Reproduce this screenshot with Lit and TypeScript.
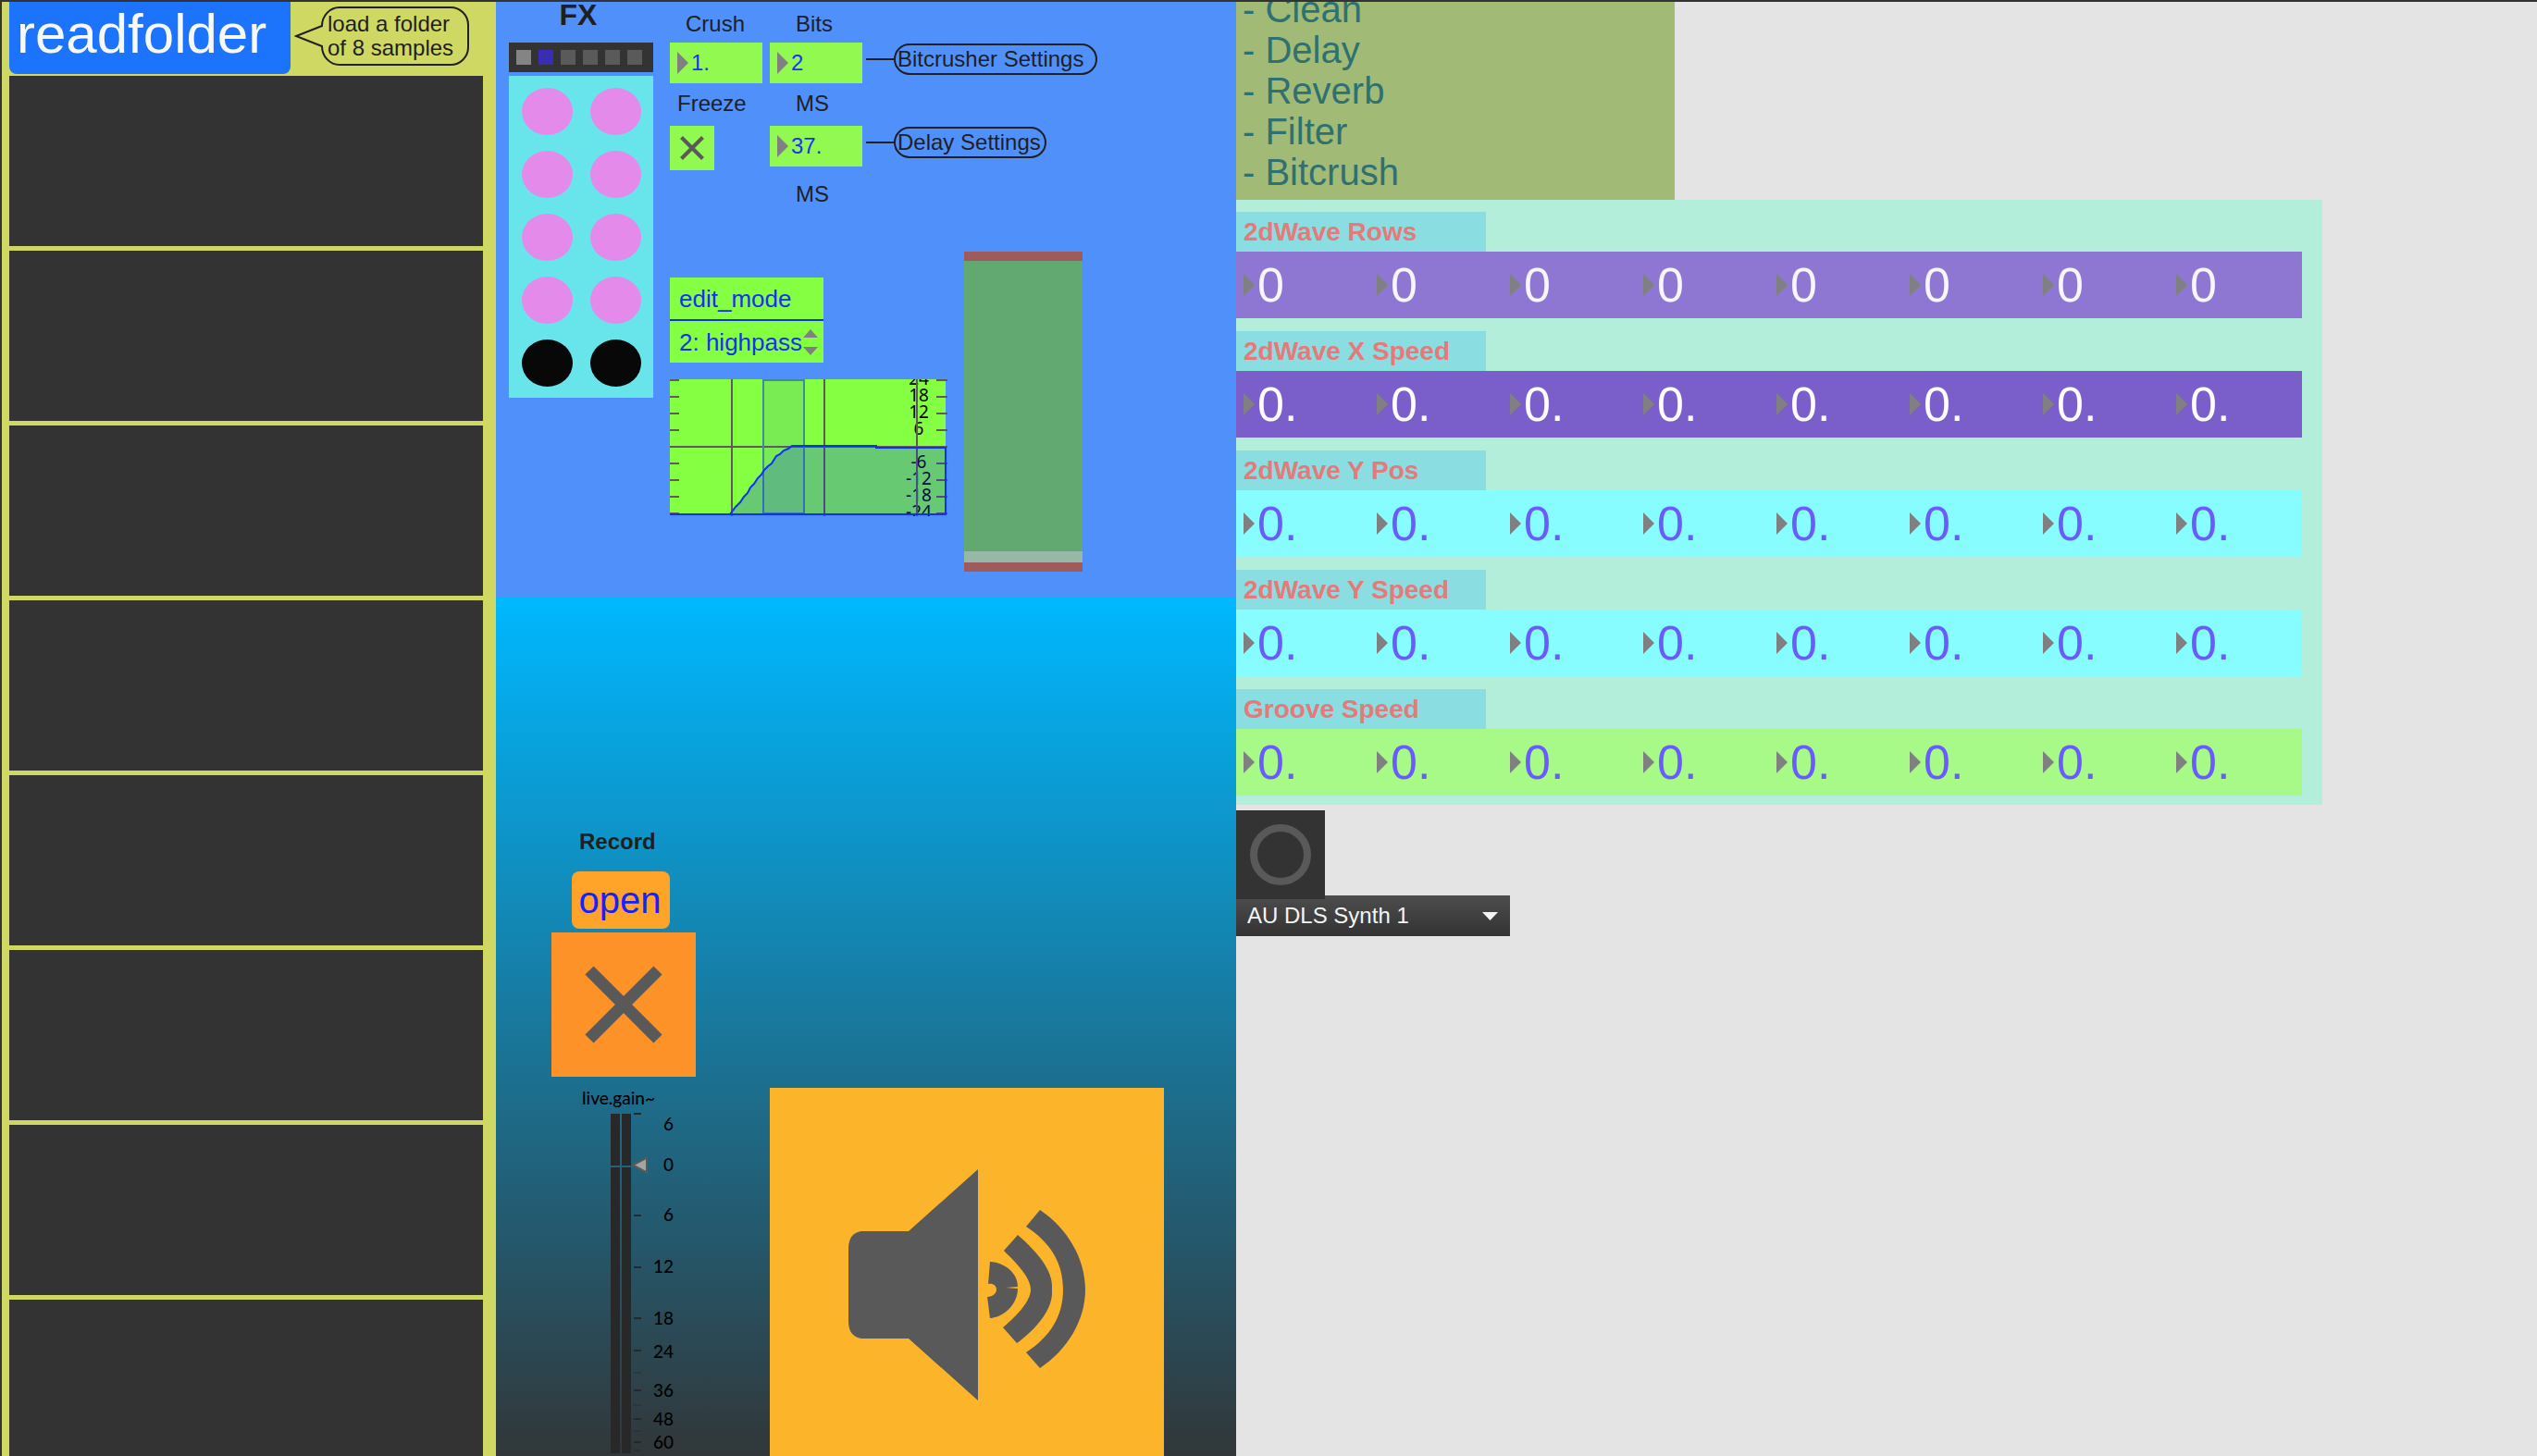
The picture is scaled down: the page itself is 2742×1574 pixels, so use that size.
import { LitElement, html, svg, css } from "lit";
import { customElement, property } from "lit/decorators.js";

const boxStyles = css`
  *,
  *::before,
  *::after {
    box-sizing: border-box;
  }
  button,
  input,
  select {
    margin: 0;
    padding: 0;
    border: 0;
    border-radius: 0;
    background: none;
    color: inherit;
    font: inherit;
    appearance: none;
  }
`;

/* Number box: a drag triangle followed by an editable value. */
@customElement("number-box")
export class NumberBox extends LitElement {
  @property() value = "0";
  @property() name = "";

  static styles = [
    boxStyles,
    css`
      :host {
        display: flex;
        align-items: center;
        gap: 3px;
        padding-left: 8px;
        min-width: 0;
      }
      .arrow {
        flex: none;
        width: 12px;
        height: 24px;
        fill: #808080;
      }
      .value {
        flex: 1;
        width: 100%;
        min-width: 0;
        height: 100%;
      }
    `,
  ];

  render() {
    return html`
      <svg class="arrow" viewBox="0 0 12 24" aria-hidden="true"><path d="M0 0 12 12 0 24Z" /></svg>
      <input class="value" type="text" aria-label=${this.name} .value=${this.value} />
    `;
  }
}

/* Toggle: a tick box drawn as a coloured square with a cross. */
@customElement("cross-toggle")
export class CrossToggle extends LitElement {
  @property() name = "";
  @property({ type: Boolean }) large = false;

  static styles = [
    boxStyles,
    css`
      :host {
        display: grid;
      }
      .box,
      .cross {
        grid-area: 1 / 1;
        width: 100%;
        height: 100%;
      }
      .cross {
        pointer-events: none;
        fill: none;
        stroke: #595959;
      }
    `,
  ];

  render() {
    return html`
      <input class="box" type="checkbox" aria-label=${this.name} />
      ${this.large
        ? html`<svg class="cross" viewBox="0 0 156 156" stroke-width="13">
            <path d="M41 41 115 115M115 41 41 115" />
          </svg>`
        : html`<svg class="cross" viewBox="0 0 48 48" stroke-width="4">
            <path d="M12.5 12.5 35.5 35.5M35.5 12.5 12.5 35.5" />
          </svg>`}
    `;
  }
}

const BANKS = [
  { title: "2dWave Rows", tone: "rows", value: "0" },
  { title: "2dWave X Speed", tone: "xspeed", value: "0." },
  { title: "2dWave Y Pos", tone: "wave", value: "0." },
  { title: "2dWave Y Speed", tone: "wave", value: "0." },
  { title: "Groove Speed", tone: "groove", value: "0." },
];

const EFFECTS = ["Clean", "Delay", "Reverb", "Filter", "Bitcrush"];

const GRAPH_TICKS = [1, 19, 37, 55, 91, 109, 127, 145];
const GRAPH_LABELS: [string, number][] = [
  ["24", 6],
  ["18", 24],
  ["12", 42],
  ["6", 60],
  ["-6", 96],
  ["-12", 114],
  ["-18", 132],
  ["-24", 150],
];

const METER_LABELS: [string, number][] = [
  ["6", 19],
  ["0", 63],
  ["6", 117],
  ["12", 173],
  ["18", 229],
  ["24", 265],
  ["36", 307],
  ["48", 338],
  ["60", 363],
];
const METER_TICKS = [1, 111, 167, 222, 257, 300, 331, 356];
const METER_FAINT_TICKS = [281, 316, 344, 365];

@customElement("app-root")
export class AppRoot extends LitElement {
  static styles = [
    boxStyles,
    css`
      :host {
        display: grid;
        grid-template-columns: 534fr 800fr 1406fr;
        grid-template-rows: minmax(0, 1fr);
        box-sizing: border-box;
        width: 100%;
        height: 100vh;
        overflow: hidden;
        border-top: 2px solid #333;
        border-left: 2px solid #333;
        background: #e4e4e4;
        color: #1f1f1f;
        font-family: "Liberation Sans", Arial, sans-serif;
        font-size: 24px;
        line-height: 28px;
      }

      /* sample column */
      .samples {
        padding: 0 14px 0 8px;
        background: #cfd863;
        overflow: hidden;
      }
      .samples-head {
        display: flex;
        align-items: flex-start;
        gap: 4px;
        height: 80px;
      }
      .readfolder {
        width: 304px;
        height: 78px;
        padding: 0 0 8px 8px;
        border-radius: 0 0 8px 8px;
        background: #1b74fb;
        color: #f8f8f8;
        font-size: 60px;
        line-height: 70px;
        text-align: left;
      }
      .bubble {
        display: grid;
        margin-top: 4px;
      }
      .bubble-shape,
      .bubble-text {
        grid-area: 1 / 1;
      }
      .bubble-shape {
        width: 190px;
        height: 66px;
        fill: none;
        stroke: #1f1f1f;
        stroke-width: 2;
      }
      .bubble-text {
        padding: 7px 0 0 36px;
        line-height: 26px;
      }
      .slots {
        display: grid;
        grid-auto-rows: 184px;
        gap: 5px;
      }
      .slot {
        background: #333;
      }

      /* middle column */
      .middle {
        display: flex;
        flex-direction: column;
        overflow: hidden;
      }
      .fx {
        flex: none;
        display: grid;
        grid-template-columns: 156px 1fr;
        column-gap: 18px;
        padding: 0 14px 27px 14px;
        background: #5090fb;
      }
      .fx-title {
        margin: 0 0 16px;
        padding-right: 6px;
        font-size: 32px;
        line-height: 28px;
        text-align: center;
      }
      .presets {
        display: flex;
        gap: 8px;
        height: 32px;
        margin-bottom: 4px;
        padding: 8px;
        background: #333;
      }
      .preset {
        width: 16px;
        height: 16px;
        background: #5a5a5a;
      }
      .preset.stored {
        background: #848484;
      }
      .preset.active {
        background: #3a2db4;
      }
      .matrix {
        display: grid;
        grid-template-columns: repeat(2, 1fr);
        grid-auto-rows: 68px;
        place-items: center;
        padding: 4px;
        background: #67e5eb;
      }
      .cell {
        width: 55px;
        height: 51px;
        border-radius: 50%;
        background: #e48aeb;
      }
      .cell.off {
        background: #080808;
      }

      .row {
        display: flex;
        align-items: flex-start;
        gap: 8px;
      }
      .row.top {
        padding: 10px 0 6px;
      }
      .row.mid {
        padding: 8px 0 10px;
      }
      .row.low {
        padding: 12px 0 0;
      }
      .row.tall {
        height: 48px;
      }
      .tag {
        width: 100px;
      }
      .tag.crush {
        padding-left: 17px;
      }
      .tag.freeze {
        padding-left: 8px;
      }
      .tag.second {
        padding-left: 28px;
      }
      .param {
        width: 100px;
        height: 44px;
        background: #91f94f;
        color: #1a33fa;
      }
      .cellbox {
        width: 100px;
      }
      .freeze-toggle {
        width: 48px;
        height: 48px;
        background: #91f94f;
      }
      .callout {
        display: flex;
        align-items: center;
        margin: 1px 0 0 -4px;
      }
      .callout::before {
        content: "";
        width: 30px;
        height: 2px;
        background: #1f1f1f;
      }
      .callout-text {
        padding: 0 4px 0 2px;
        border: 2px solid #1f1f1f;
        border-radius: 17px;
        line-height: 30px;
        white-space: nowrap;
      }
      .callout-text.wide {
        min-width: 220px;
      }

      .filter {
        display: flex;
        align-items: flex-start;
        gap: 18px;
        padding-top: 48px;
      }
      .filter-left {
        width: 300px;
        padding-top: 28px;
      }
      .attr {
        width: 166px;
        margin-bottom: 18px;
        background: #84ff42;
        color: #1530f5;
        font-size: 26px;
      }
      .attr-name {
        display: block;
        height: 47px;
        padding-left: 10px;
        border-bottom: 2px solid #1530f5;
        line-height: 46px;
      }
      .attr-pick {
        display: grid;
        align-items: center;
      }
      .attr-select,
      .attr-arrows {
        grid-area: 1 / 1;
      }
      .attr-select {
        width: 100%;
        height: 45px;
        padding: 0 0 0 10px;
      }
      .attr-arrows {
        justify-self: end;
        width: 16px;
        height: 28px;
        margin-right: 6px;
        fill: #808080;
        pointer-events: none;
      }
      .graph {
        display: block;
        width: 300px;
        height: 148px;
      }
      .graph-text {
        font-family: "Noto Sans", "Open Sans", sans-serif;
        font-size: 19px;
        text-anchor: middle;
      }
      .slider {
        display: grid;
      }
      .slider-face,
      .slider-input {
        grid-area: 1 / 1;
        width: 128px;
        height: 346px;
      }
      .slider-face {
        display: flex;
        flex-direction: column;
        justify-content: flex-end;
        border: solid #9f5b5b;
        border-width: 10px 0;
        background: #62a971;
      }
      .slider-knob {
        height: 12px;
        background: #97b8a9;
      }
      .slider-input,
      .meter-input {
        writing-mode: vertical-lr;
        direction: rtl;
        opacity: 0;
      }

      .output {
        flex: 1 0 auto;
        display: flex;
        align-items: flex-start;
        background: linear-gradient(#00b8ff, #333);
      }
      .record {
        width: 296px;
        height: 929px;
        padding: 251px 80px 0 60px;
      }
      .record-title {
        margin: 0 0 18px;
        padding-left: 30px;
        font-size: 24px;
        line-height: 28px;
      }
      .open {
        display: block;
        width: 106px;
        height: 62px;
        margin: 0 0 4px 22px;
        padding-right: 2px;
        border-radius: 8px;
        background: #ffa429;
        color: #1522ff;
        font-size: 40px;
        line-height: 62px;
        text-align: center;
      }
      .record-toggle {
        width: 156px;
        height: 156px;
        background: #fc9228;
      }
      .meter-title {
        display: block;
        margin: 11px 0 4px;
        padding-left: 33px;
        color: #000;
        font: 500 19px/24px Lato, "Open Sans", sans-serif;
      }
      .meter {
        display: grid;
      }
      .meter-face,
      .meter-input {
        grid-area: 1 / 1;
        width: 136px;
        height: 371px;
      }
      .meter-text {
        font-family: Lato, "Open Sans", sans-serif;
        font-size: 19px;
        font-weight: 500;
        text-anchor: end;
      }
      .speaker {
        width: 426px;
        height: 426px;
        margin-top: 531px;
        background: #fcb42b;
      }
      .speaker-icon {
        display: block;
        width: 426px;
        height: 426px;
        fill: #595959;
      }

      /* right column */
      .right {
        display: grid;
        grid-template-columns: 1174fr 232fr;
        grid-template-rows: 214px auto auto;
        align-content: start;
        overflow: hidden;
      }
      .right > * {
        grid-column: 1;
      }
      .effects {
        display: flex;
        flex-direction: column;
        justify-content: flex-end;
        width: 474px;
        margin: 0;
        padding: 0 0 8px 7px;
        overflow: hidden;
        background: #a1bb76;
        color: #2f7070;
        font-size: 40px;
        line-height: 44px;
        list-style: none;
      }
      .effect {
        flex: none;
      }
      .banks {
        display: grid;
        gap: 14px;
        padding: 13px 22px 10px 0;
        background: #b3eedb;
      }
      .bank-title {
        width: 270px;
        height: 43px;
        margin: 0;
        padding: 6px 0 0 8px;
        background: #8adde1;
        color: #e57a7a;
        font-size: 28px;
        line-height: 32px;
      }
      .bank-values {
        display: grid;
        grid-template-columns: repeat(8, 1fr);
        height: 72px;
        font-size: 52px;
        line-height: 72px;
      }
      .rows {
        background: #8d77d3;
        color: #f6f6f6;
      }
      .xspeed {
        background: #7a5fca;
        color: #fff;
      }
      .wave {
        background: #88fdff;
        color: #695cfd;
      }
      .groove {
        background: #a7fa88;
        color: #695cfd;
      }
      .synth {
        padding-top: 6px;
      }
      .bang {
        position: relative;
        z-index: 1;
        display: block;
        width: 96px;
        height: 96px;
        background: #333;
      }
      .bang-ring {
        display: block;
        width: 96px;
        height: 96px;
        fill: none;
        stroke: #595959;
        stroke-width: 8;
      }
      .voice {
        display: grid;
        align-items: center;
        width: 296px;
        margin-top: -4px;
        background: linear-gradient(#4d4d4d, #333);
        color: #f4f4f4;
      }
      .voice-select,
      .voice-arrow {
        grid-area: 1 / 1;
      }
      .voice-select {
        width: 100%;
        height: 44px;
        padding: 0 0 0 12px;
      }
      .voice-arrow {
        justify-self: end;
        width: 17px;
        height: 9px;
        margin-right: 13px;
        fill: #f4f4f4;
        pointer-events: none;
      }
      option {
        color: #1f1f1f;
      }
    `,
  ];

  private renderSamples() {
    return html`
      <section class="samples">
        <div class="samples-head">
          <button class="readfolder" type="button">readfolder</button>
          <div class="bubble">
            <svg class="bubble-shape" viewBox="0 0 190 66" aria-hidden="true">
              <path
                d="M30 22A19 20 0 0 1 49 2H169A19 19 0 0 1 188 21V45A19 19 0 0 1 169 64H49A19 20 0 0 1 30 44L2 33Z"
              />
            </svg>
            <div class="bubble-text">load a folder<br />of 8 samples</div>
          </div>
        </div>
        <div class="slots">${Array.from({ length: 8 }, () => html`<div class="slot"></div>`)}</div>
      </section>
    `;
  }

  private renderGraph() {
    return html`
      <svg class="graph" viewBox="0 0 300 148" role="img" aria-label="Filter response">
        <rect width="298" height="147" fill="#84ff42" />
        ${GRAPH_LABELS.map(([t, y]) => svg`<text class="graph-text" x="269" y=${y}>${t}</text>`)}
        <g fill="#605a5a">
          <rect x="66" width="2" height="148" />
          <rect x="166" width="2" height="148" />
          <rect x="266" width="2" height="148" />
          <rect y="72" width="300" height="2" />
          ${GRAPH_TICKS.map(
            (y) => svg`<rect y=${y - 1} width="10" height="2" /><rect x="288" y=${y - 1} width="12" height="2" />`
          )}
        </g>
        <rect x="101" y="1" width="44" height="144" fill="#3060d0" fill-opacity=".12" stroke="#3f8ba0" stroke-width="2" />
        <path
          d="M65 146 71 138 76 133 80 127 84 123 87 117 91 113 95 107 99 103 102 98 106 94 110 91 115 83 119 81 123 77 128 75 132 72H223L223 74H298V146Z"
          fill="#1027fe"
          fill-opacity=".25"
        />
        <path
          d="M0 146H298V74H223V72H132L128 75 123 77 119 81 115 83 110 91 106 94 102 98 99 103 95 107 91 113 87 117 84 123 80 127 76 133 71 138 65 146"
          fill="none"
          stroke="#1030fa"
          stroke-width="2"
        />
      </svg>
    `;
  }

  private renderFx() {
    return html`
      <section class="fx">
        <div>
          <h2 class="fx-title">FX</h2>
          <div class="presets">
            ${["stored", "active", "", "", "", ""].map(
              (s, i) => html`<button class="preset ${s}" type="button" aria-label="Preset ${i + 1}"></button>`
            )}
          </div>
          <div class="matrix">
            ${Array.from(
              { length: 10 },
              (_, i) =>
                html`<button class="cell ${i > 7 ? "off" : ""}" type="button" aria-label="Cell ${i + 1}"></button>`
            )}
          </div>
        </div>
        <div>
          <div class="row top">
            <span class="tag crush">Crush</span>
            <span class="tag second">Bits</span>
          </div>
          <div class="row">
            <number-box class="param" name="Crush" value="1."></number-box>
            <number-box class="param" name="Bits" value="2"></number-box>
            <div class="callout"><span class="callout-text wide">Bitcrusher Settings</span></div>
          </div>
          <div class="row mid">
            <span class="tag freeze">Freeze</span>
            <span class="tag second">MS</span>
          </div>
          <div class="row tall">
            <div class="cellbox"><cross-toggle class="freeze-toggle" name="Freeze"></cross-toggle></div>
            <number-box class="param" name="MS" value="37."></number-box>
            <div class="callout"><span class="callout-text">Delay Settings</span></div>
          </div>
          <div class="row low">
            <span class="tag"></span>
            <span class="tag second">MS</span>
          </div>
          <div class="filter">
            <div class="filter-left">
              <div class="attr">
                <label class="attr-name" for="mode">edit_mode</label>
                <div class="attr-pick">
                  <select class="attr-select" id="mode">
                    <option>2: highpass</option>
                  </select>
                  <svg class="attr-arrows" viewBox="0 0 16 28" aria-hidden="true">
                    <path d="M0 9 8 0 16 9ZM0 19H16L8 28Z" />
                  </svg>
                </div>
              </div>
              ${this.renderGraph()}
            </div>
            <div class="slider">
              <div class="slider-face"><div class="slider-knob"></div></div>
              <input class="slider-input" type="range" min="0" max="127" value="0" aria-label="Filter amount" />
            </div>
          </div>
        </div>
      </section>
    `;
  }

  private renderOutput() {
    return html`
      <section class="output">
        <div class="record">
          <h3 class="record-title">Record</h3>
          <button class="open" type="button">open</button>
          <cross-toggle class="record-toggle" name="Record" large></cross-toggle>
          <label class="meter-title" for="gain">live.gain~</label>
          <div class="meter">
            <svg class="meter-face" viewBox="0 0 136 371" aria-hidden="true">
              <g fill="#282828">
                <rect x="64" y="1" width="10" height="56" />
                <rect x="76" y="1" width="10" height="56" />
                <rect x="64" y="59" width="10" height="309" />
                <rect x="76" y="59" width="10" height="309" />
                ${METER_TICKS.map((y) => svg`<rect x="89" y=${y - 1} width="8" height="2" />`)}
                ${METER_FAINT_TICKS.map(
                  (y) => svg`<rect x="89" y=${y - 1} width="8" height="2" fill-opacity=".4" />`
                )}
              </g>
              <path d="M88 56.5 103 48.5V64.5Z" fill="#a4a4a4" stroke="#595959" stroke-width="2" />
              ${METER_LABELS.map(([t, y]) => svg`<text class="meter-text" x="132" y=${y}>${t}</text>`)}
            </svg>
            <input class="meter-input" id="gain" type="range" min="-70" max="6" value="0" />
          </div>
        </div>
        <button class="speaker" type="button" aria-label="Audio on">
          <svg class="speaker-icon" viewBox="0 0 426 426" aria-hidden="true">
            <path d="M99 155H150L225 88V338L150 271H99Q85 269 85 252V174Q85 157 99 155Z" />
            <path
              d="M238 188C254 189 268 200 268 215L255 216 268 217C268 234 253 248 238 249L235 226C241 226 245 222 245 218 245 214 241 211 236 212Z"
            />
            <path
              d="M268 159C284 173 305 194 305 214V222C305 242 284 264 267 276L252 259C263 250 282 232 282 218 282 204 264 187 253 176Z"
            />
            <path
              d="M292 132C322 152 341 185 341 218 341 251 322 283 292 303L277 286C303 269 317 247 317 218 317 189 303 167 277 150Z"
            />
          </svg>
        </button>
      </section>
    `;
  }

  private renderRight() {
    return html`
      <section class="right">
        <ul class="effects">
          ${EFFECTS.map((e) => html`<li class="effect">- ${e}</li>`)}
        </ul>
        <div class="banks">
          ${BANKS.map(
            (b) => html`
              <div>
                <h3 class="bank-title">${b.title}</h3>
                <div class="bank-values ${b.tone}">
                  ${Array.from(
                    { length: 8 },
                    (_, i) => html`<number-box name="${b.title} ${i + 1}" value=${b.value}></number-box>`
                  )}
                </div>
              </div>
            `
          )}
        </div>
        <div class="synth">
          <button class="bang" type="button" aria-label="Trigger">
            <svg class="bang-ring" viewBox="0 0 96 96" aria-hidden="true"><circle cx="48" cy="48" r="29" /></svg>
          </button>
          <div class="voice">
            <select class="voice-select" aria-label="Synth">
              <option>AU DLS Synth 1</option>
            </select>
            <svg class="voice-arrow" viewBox="0 0 17 9" aria-hidden="true"><path d="M0 0H17L8.5 9Z" /></svg>
          </div>
        </div>
      </section>
    `;
  }

  render() {
    return html`
      ${this.renderSamples()}
      <div class="middle">${this.renderFx()} ${this.renderOutput()}</div>
      ${this.renderRight()}
    `;
  }
}
